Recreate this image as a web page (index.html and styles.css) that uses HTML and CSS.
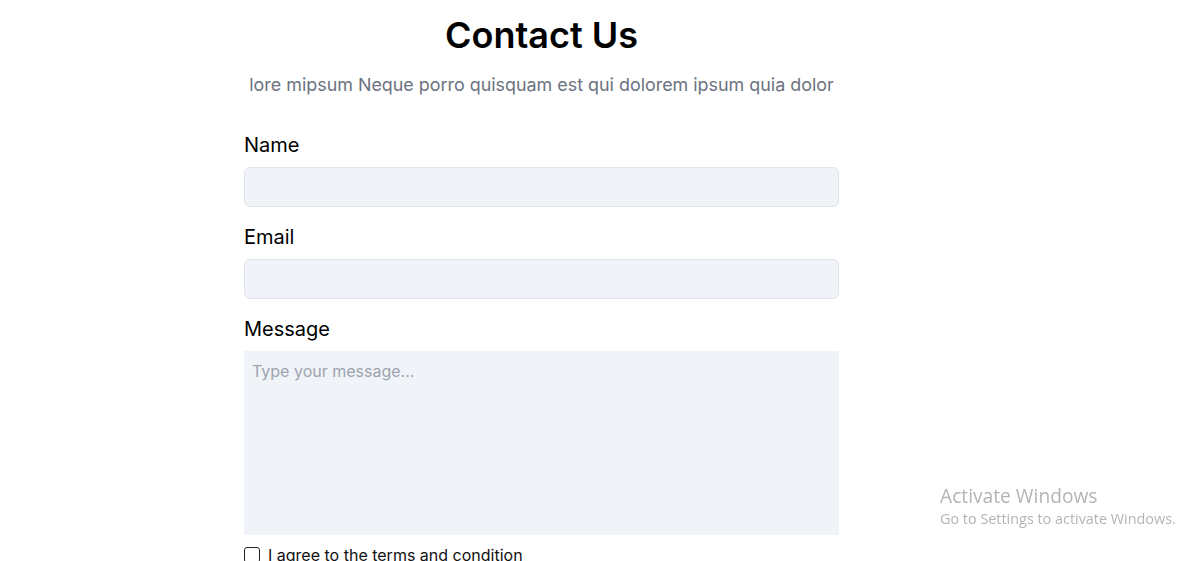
FILE: index.html
```html
<!DOCTYPE html>
<html lang="en">
<head>
<meta charset="utf-8">
<title>Contact Us</title>
<link rel="stylesheet" href="styles.css">
</head>
<body>
<main class="page">
  <section class="contact">
    <h1 class="title">Contact Us</h1>
    <p class="subtitle">lore mipsum Neque porro quisquam est qui dolorem ipsum quia dolor</p>
    <form class="form">
      <div class="field">
        <label class="label" for="name">Name</label>
        <input class="input" id="name" type="text">
      </div>
      <div class="field">
        <label class="label" for="email">Email</label>
        <input class="input" id="email" type="email">
      </div>
      <div class="field">
        <label class="label" for="message">Message</label>
        <textarea class="textarea" id="message" placeholder="Type your message..."></textarea>
      </div>
      <label class="agree"><input class="check" type="checkbox"> I agree to the terms and condition</label>
    </form>
  </section>
</main>
<div class="watermark">
  <div class="wm-title">Activate Windows</div>
  <div class="wm-sub">Go to Settings to activate Windows.</div>
</div>
</body>
</html>
```

FILE: styles.css
```css
* { box-sizing: border-box; }
html, body { margin: 0; padding: 0; background: #fff; }
body {
  font-family: Inter, "Liberation Sans", sans-serif;
  color: #111;
  overflow: hidden;
  height: 561px;
}
.page {
  padding-left: 244px;
  padding-top: 15px;
}
.contact {
  width: 595px;
  display: flex;
  flex-direction: column;
}
.title {
  margin: 0;
  font-size: 36px;
  line-height: 40px;
  font-weight: 600;
  text-align: center;
  color: #000;
}
.subtitle {
  margin: 16px 0 0;
  font-size: 17.9px;
  line-height: 28px;
  color: #6b7280;
  text-align: center;
}
.form {
  margin-top: 32px;
  display: flex;
  flex-direction: column;
  gap: 16px;
}
.field {
  display: flex;
  flex-direction: column;
  gap: 8px;
}
.label {
  font-size: 20px;
  line-height: 28px;
  font-weight: 400;
  color: #000;
}
.input {
  height: 40px;
  background: #f0f3f7;
  border: 1px solid #e1e4e9;
  border-radius: 6px;
  font: inherit;
}
.textarea {
  height: 184px;
  background: #f0f3f7;
  border: none;
  border-radius: 0;
  padding: 9px 8px;
  font-family: Inter, "Liberation Sans", sans-serif;
  font-size: 16px;
  line-height: 22px;
  resize: none;
}
.textarea::placeholder { color: #9ca3af; }
.agree {
  margin-top: -8px;
  display: flex;
  align-items: center;
  gap: 8px;
  font-size: 16px;
  line-height: 24px;
  color: #111;
}
.check {
  margin: 0;
  width: 16px;
  height: 16px;
  appearance: none;
  border: 1.5px solid #222;
  border-radius: 3px;
  background: #fff;
}
.watermark {
  position: fixed;
  left: 940px;
  top: 483px;
  color: #b4b4b4;
  font-family: "Open Sans", "Noto Sans", sans-serif;
}
.wm-title {
  font-size: 19.2px;
  line-height: 25px;
}
.wm-sub {
  font-size: 14.4px;
  line-height: 21px;
}
```
